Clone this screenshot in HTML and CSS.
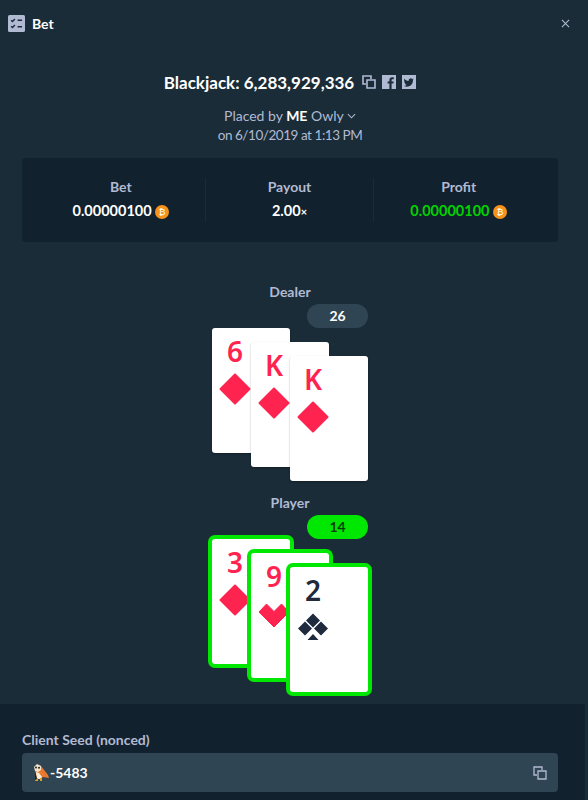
FILE: index.html
```html
<!DOCTYPE html>
<html lang="en">
<head>
    <meta charset="UTF-8" />
    <title>Bet</title>
    <link rel="stylesheet" href="styles.css">
</head>
<body>
<div class="modal">
    <header class="modal-head">
        <div class="modal-title">
            <svg class="title-icon" viewBox="0 0 16 16">
                <rect width="16" height="16" rx="1.5" fill="#b1bad3"/>
                <path d="M3 5l1.200 1.200L6.500 3.800M3 10.600l1.200 1.200 2.300-2.400M9 5h4.200M9 11h4.200" fill="none" stroke="#1a2c38" stroke-width="1.300"/>
            </svg>
            <span>Bet</span>
        </div>
        <svg class="close-icon" viewBox="0 0 10 10">
            <path d="M1 1l8 8M9 1l-8 8" stroke="#b1bad3" stroke-width="1.200"/>
        </svg>
    </header>

    <section class="bet-info">
        <div class="bet-id">
            <span>Blackjack: 6,283,929,336</span>
            <svg class="bet-icon" viewBox="0 0 14 14">
                <path d="M9 4V1H1v8h3M5 5h8v8H5z" fill="none" stroke="#b1bad3" stroke-width="1.600"/>
            </svg>
            <svg class="bet-icon" viewBox="0 0 14 14">
                <rect width="14" height="14" fill="#b1bad3"/>
                <path d="M9.600 14V8.600h1.800l.3-2.100H9.600V5.200c0-.6.2-1 1-1h1.200V2.300c-.2 0-.9-.1-1.700-.1-1.700 0-2.700 1-2.700 2.800v1.500H5.600v2.100h1.800V14z" fill="#1a2c38"/>
            </svg>
            <svg class="bet-icon" viewBox="0 0 14 14">
                <rect width="14" height="14" fill="#b1bad3"/>
                <path d="M11.800 4.400c-.4.2-.8.3-1.200.3.4-.3.8-.7.9-1.100-.4.2-.9.4-1.300.5a2.100 2.100 0 0 0-3.600 1.900C4.900 5.900 3.400 5.100 2.400 3.800c-.6 1-.3 2.200.6 2.800-.3 0-.7-.1-1-.3 0 1 .7 1.900 1.700 2.100-.3.1-.6.1-.9 0 .3.8 1.100 1.400 2 1.500-.9.7-2 1-3.100.9 3.600 2.200 9.300.4 9.300-5.700.3-.2.600-.4.800-.7z" fill="#1a2c38"/>
            </svg>
        </div>
        <div class="placed-by">
            Placed by <strong>ME</strong> Owly
            <svg class="chevron" viewBox="0 0 10 6">
                <path d="M1 1l4 4 4-4" fill="none" stroke="#b1bad3" stroke-width="1.200"/>
            </svg>
        </div>
        <div class="placed-on">on 6/10/2019 at 1:13 PM</div>
    </section>

    <section class="stats">
        <div class="stat">
            <div class="stat-label">Bet</div>
            <div class="stat-value">0.00000100 <span class="btc">&#8383;</span></div>
        </div>
        <div class="stat">
            <div class="stat-label">Payout</div>
            <div class="stat-value">2.00<small>×</small></div>
        </div>
        <div class="stat">
            <div class="stat-label">Profit</div>
            <div class="stat-value win">0.00000100 <span class="btc">&#8383;</span></div>
        </div>
    </section>

    <section class="table">
        <div class="hand">
            <div class="hand-label">Dealer</div>
            <div class="hand-total">26</div>
            <div class="cards">
                <div class="card">
                    <div class="rank red">6</div>
                    <svg class="suit" viewBox="0 0 32 32"><use href="#diamond"/></svg>
                </div>
                <div class="card">
                    <div class="rank red">K</div>
                    <svg class="suit" viewBox="0 0 32 32"><use href="#diamond"/></svg>
                </div>
                <div class="card">
                    <div class="rank red">K</div>
                    <svg class="suit" viewBox="0 0 32 32"><use href="#diamond"/></svg>
                </div>
            </div>
        </div>

        <div class="hand player">
            <div class="hand-label">Player</div>
            <div class="hand-total won">14</div>
            <div class="cards">
                <div class="card won">
                    <div class="rank red">3</div>
                    <svg class="suit" viewBox="0 0 32 32"><use href="#diamond"/></svg>
                </div>
                <div class="card won">
                    <div class="rank red">9</div>
                    <svg class="suit" viewBox="0 0 32 32">
                        <path d="M8.500 6L16 13.500 23.500 6 31 14 16 29 1 14z" fill="#ff2450" stroke="#ff2450" stroke-linejoin="round"/>
                    </svg>
                </div>
                <div class="card won">
                    <div class="rank dark">2</div>
                    <svg class="suit" viewBox="0 0 32 32">
                        <path d="M16 1.500l7 7-7 7-7-7zM8 9.500l7 7-7 7-7-7zM24 9.500l7 7-7 7-7-7zM16 22l5.500 6h-11z" fill="#1f2a3c"/>
                    </svg>
                </div>
            </div>
        </div>
    </section>

    <footer class="seed-panel">
        <label class="seed-label">Client Seed (nonced)</label>
        <div class="seed-input">
            <svg class="owl" viewBox="0 0 16 17">
                <path d="M4 1l4 1 7 9 1 3-6-1-2 2H4L2 8z" fill="#e8792e"/>
                <path d="M1 3l3-3 4 2v4L5 8 2 7z" fill="#f4e2c8"/>
                <circle cx="3" cy="3.500" r="1" fill="#222"/>
                <circle cx="6" cy="3.800" r="1" fill="#222"/>
                <path d="M3 8l3 1 3 4-2 2H4z" fill="#f6efe0"/>
                <path d="M3 14h2v3H2zM7 14h2v3H7z" fill="#e0a020"/>
                <path d="M2 7l2 8-2 1z" fill="#222"/>
            </svg>
            <span class="seed-text">-5483</span>
            <svg class="seed-copy" viewBox="0 0 14 14">
                <path d="M9 4V1H1v8h3M5 5h8v8H5z" fill="none" stroke="#b1bad3" stroke-width="1.300"/>
            </svg>
        </div>
    </footer>
</div>

<svg class="defs" width="0" height="0">
    <defs>
        <path id="diamond" d="M16 1.500L30.500 16 16 30.500 1.500 16z" fill="#ff2450" stroke="#ff2450" stroke-width="2" stroke-linejoin="round"/>
    </defs>
</svg>
</body>
</html>
```

FILE: styles.css
```css
html, body {
    margin: 0;
    height: 800px;
    overflow: hidden;
    background-color: #1a2c38;
}
body {
    font-family: Lato, "Open Sans", sans-serif;
    font-size: 14px;
    color: #b1bad3;
}
.defs {
    position: absolute;
}
.modal {
    width: 588px;
    height: 800px;
    display: flex;
    flex-direction: column;
}
.modal-head {
    display: flex;
    justify-content: space-between;
    align-items: center;
    box-sizing: border-box;
    padding: 14px 18px 0 8px;
    height: 33px;
}
.modal-title {
    display: flex;
    align-items: center;
    gap: 7px;
    font-weight: 700;
    font-size: 14px;
    color: #fff;
}
.title-icon {
    width: 17px;
    height: 17px;
}
.close-icon {
    width: 9px;
    height: 9px;
}

.bet-info {
    width: 580px;
    margin-top: 38px;
    text-align: center;
}
.bet-id {
    display: flex;
    justify-content: center;
    align-items: center;
    gap: 6px;
    font-size: 17px;
    font-weight: 700;
    color: #fff;
    height: 22px;
}
.bet-id span {
    margin-right: 2px;
}
.bet-icon {
    width: 14px;
    height: 14px;
}
.placed-by {
    margin-top: 13px;
    line-height: 20px;
}
.placed-by strong {
    color: #fff;
}
.chevron {
    width: 9px;
    height: 6px;
    vertical-align: 2px;
}
.placed-on {
    line-height: 19px;
    font-size: 13.5px;
    letter-spacing: -0.45px;
}

.stats {
    display: grid;
    grid-template-columns: 1fr 1fr 1fr;
    width: 536px;
    box-sizing: border-box;
    margin: 13px 0 0 22px;
    padding: 20px 15px;
    height: 84px;
    background-color: #11212d;
    border-radius: 3px;
}
.stat {
    text-align: center;
    border-right: 1px solid #1a2c38;
}
.stat:last-child {
    border-right: none;
}
.stat-label {
    font-weight: 700;
    line-height: 18px;
}
.stat-value {
    margin-top: 6px;
    font-weight: 700;
    font-size: 14.5px;
    color: #fff;
    line-height: 18px;
}
.stat-value small {
    font-size: 11px;
}
.stat-value.win {
    color: #00d301;
}
.btc {
    display: inline-block;
    width: 14px;
    height: 14px;
    border-radius: 50%;
    background-color: #f7931a;
    color: #fff;
    font-size: 9px;
    line-height: 14px;
    font-family: "DejaVu Sans", sans-serif;
    font-weight: 400;
    vertical-align: 1px;
}

.table {
    width: 580px;
    display: flex;
    flex-direction: column;
    align-items: center;
    margin-top: 41px;
}
.hand {
    width: 156px;
}
.hand.player {
    margin-top: 13px;
}
.hand-label {
    text-align: center;
    font-weight: 700;
    font-size: 14px;
    line-height: 18px;
}
.hand-total {
    width: 61px;
    height: 24px;
    margin: 3px 0 0 auto;
    border-radius: 12px;
    background-color: #2f4553;
    color: #fff;
    font-size: 14px;
    font-weight: 700;
    line-height: 24px;
    text-align: center;
}
.hand-total.won {
    background-color: #00e701;
    color: #05400a;
}
.cards {
    display: flex;
    align-items: flex-start;
    height: 153px;
}
.card {
    display: flex;
    flex-direction: column;
    align-items: center;
    flex: none;
    width: 78px;
    height: 125px;
    box-sizing: border-box;
    padding-right: 32px;
    background-color: #fff;
    border-radius: 3px;
    box-shadow: 0 1px 2px rgba(0, 0, 0, 0.3);
}
.card + .card {
    margin: 14px 0 0 -39px;
}
.card + .card + .card {
    margin-top: 28px;
}
.card.won {
    box-shadow: 0 0 0 4px #00e701;
}
.rank {
    font-family: "Noto Sans", sans-serif;
    font-size: 28px;
    font-weight: 600;
    line-height: 30px;
    margin-top: 8px;
}
.rank.red {
    color: #ff2450;
}
.rank.dark {
    color: #1f2a3c;
}
.suit {
    width: 32px;
    height: 32px;
    margin-top: 7px;
}

.seed-panel {
    flex: 1;
    margin: 12px 3px 0 0;
    padding: 27px 27px 0 22px;
    background-color: #11212d;
}
.seed-label {
    display: block;
    font-weight: 700;
    font-size: 14px;
    line-height: 18px;
}
.seed-input {
    display: flex;
    align-items: center;
    gap: 1px;
    height: 39px;
    margin-top: 4px;
    box-sizing: border-box;
    padding: 0 11px;
    background-color: #2f4553;
    border-radius: 4px;
}
.owl {
    width: 16px;
    height: 17px;
}
.seed-text {
    flex: 1;
    color: #fff;
    font-weight: 700;
}
.seed-copy {
    width: 14px;
    height: 14px;
}
```
